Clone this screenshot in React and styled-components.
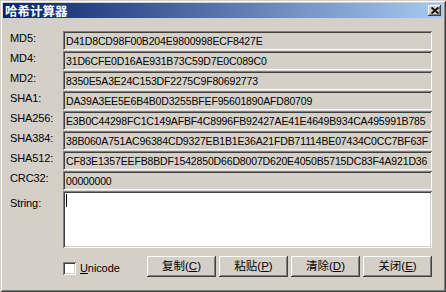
import React from "react";
import styled, { createGlobalStyle } from "styled-components";

const GlobalStyle = createGlobalStyle`
  html, body { margin: 0; padding: 0; background: #d4d0c8; }
  body { width: 446px; height: 292px; overflow: hidden; }
`;

const raised = `
  box-shadow: inset -1px -1px #404040, inset 1px 1px #ffffff,
    inset -2px -2px #808080, inset 2px 2px #d4d0c8;
`;
const sunken = `
  box-shadow: inset 1px 1px #808080, inset -1px -1px #ffffff,
    inset 2px 2px #404040, inset -2px -2px #d4d0c8;
`;

const Window = styled.div`
  width: 446px;
  height: 292px;
  box-sizing: border-box;
  padding: 3px;
  background: #d4d0c8;
  box-shadow: inset 1px 1px #d4d0c8, inset -1px -1px #404040,
    inset 2px 2px #ffffff, inset -2px -2px #808080;
  display: flex;
  flex-direction: column;
  font-family: "Liberation Sans", "Noto Sans CJK SC", sans-serif;
  font-size: 10.5px;
  letter-spacing: -0.15px;
  color: #000;
`;

const TitleBar = styled.div`
  height: 15px;
  display: flex;
  align-items: center;
  justify-content: space-between;
  padding: 0 2px;
  background: linear-gradient(to right, #0a246a, #a6caf0);
`;

const Title = styled.span`
  font-family: "Noto Sans CJK SC", sans-serif;
  font-weight: bold;
  font-size: 12.5px;
  letter-spacing: 0;
  line-height: 15px;
  color: #fff;
`;

const CloseBtn = styled.div`
  width: 13px;
  height: 11px;
  background: #d4d0c8;
  ${raised}
  display: flex;
  align-items: center;
  justify-content: center;
`;

const Body = styled.div`
  padding: 13px 11px 0 7px;
  display: grid;
  grid-template-columns: 53px 369px;
  row-gap: 1px;
`;

const Label = styled.div`
  font-size: 11px;
  letter-spacing: -0.1px;
  line-height: 14px;
  padding-top: ${(p) => p.$offset || 0}px;
  white-space: nowrap;
`;

const Field = styled.div`
  height: 19px;
  box-sizing: border-box;
  padding: 2px 2px 0 3px;
  line-height: 17px;
  background: #d4d0c8;
  ${sunken}
  white-space: nowrap;
  overflow: hidden;
`;

const TextBox = styled.div`
  height: 57px;
  box-sizing: border-box;
  padding: 3px 3px;
  background: #ffffff;
  ${sunken}
`;

const Caret = styled.span`
  display: block;
  width: 1px;
  height: 13px;
  background: #000;
`;

const Footer = styled.div`
  grid-column: 2;
  margin-top: 7px;
  display: flex;
  align-items: flex-start;
`;

const CheckGroup = styled.label`
  display: flex;
  align-items: center;
  gap: 4px;
  margin-top: 6px;
`;

const CheckBox = styled.span`
  width: 13px;
  height: 13px;
  box-sizing: border-box;
  background: #fff;
  ${sunken}
`;

const CheckText = styled.span`
  font-size: 11px;
  letter-spacing: -0.1px;
  line-height: 13px;
`;

const Buttons = styled.div`
  margin-left: auto;
  display: flex;
  gap: 3px;
`;

const Button = styled.div`
  width: 69px;
  height: 21px;
  box-sizing: border-box;
  background: #d4d0c8;
  ${raised}
  display: flex;
  align-items: center;
  justify-content: center;
  font-family: "Liberation Sans", "Noto Sans CJK SC", sans-serif;
  font-size: 11.5px;
  letter-spacing: 0;
  line-height: 21px;
`;

const rows = [
  ["MD5:", "D41D8CD98F00B204E9800998ECF8427E"],
  ["MD4:", "31D6CFE0D16AE931B73C59D7E0C089C0"],
  ["MD2:", "8350E5A3E24C153DF2275C9F80692773"],
  ["SHA1:", "DA39A3EE5E6B4B0D3255BFEF95601890AFD80709"],
  ["SHA256:", "E3B0C44298FC1C149AFBF4C8996FB92427AE41E4649B934CA495991B785"],
  ["SHA384:", "38B060A751AC96384CD9327EB1B1E36A21FDB71114BE07434C0CC7BF63F"],
  ["SHA512:", "CF83E1357EEFB8BDF1542850D66D8007D620E4050B5715DC83F4A921D36"],
  ["CRC32:", "00000000"],
];

const buttons = [
  ["复制", "C"],
  ["粘贴", "P"],
  ["清除", "D"],
  ["关闭", "E"],
];

export default function App() {
  return (
    <>
      <GlobalStyle />
      <Window>
        <TitleBar>
          <Title>哈希计算器</Title>
          <CloseBtn>
            <svg width="8" height="7" viewBox="0 0 8 7">
              <path d="M0.5 0.5 L7.5 6.5 M7.5 0.5 L0.5 6.5" stroke="#000" strokeWidth="1.7" />
            </svg>
          </CloseBtn>
        </TitleBar>
        <Body>
          {rows.map(([l, v]) => (
            <React.Fragment key={l}>
              <Label>{l}</Label>
              <Field>{v}</Field>
            </React.Fragment>
          ))}
          <Label $offset={5}>String:</Label>
          <TextBox>
            <Caret />
          </TextBox>
          <Footer>
            <CheckGroup>
              <CheckBox />
              <CheckText>
                <u>U</u>nicode
              </CheckText>
            </CheckGroup>
            <Buttons>
              {buttons.map(([t, k]) => (
                <Button key={k}>
                  {t}(<u>{k}</u>)
                </Button>
              ))}
            </Buttons>
          </Footer>
        </Body>
      </Window>
    </>
  );
}
